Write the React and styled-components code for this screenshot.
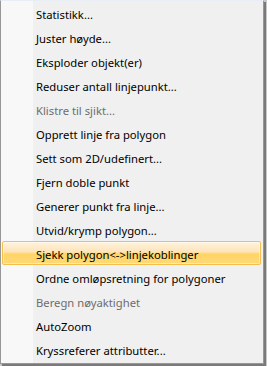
import styled, { createGlobalStyle } from "styled-components";

const items = [
    { label: "Statistikk..." },
    { label: "Juster høyde..." },
    { label: "Eksploder objekt(er)" },
    { label: "Reduser antall linjepunkt..." },
    { label: "Klistre til sjikt...", disabled: true },
    { label: "Opprett linje fra polygon" },
    { label: "Sett som 2D/udefinert..." },
    { label: "Fjern doble punkt" },
    { label: "Generer punkt fra linje..." },
    { label: "Utvid/krymp polygon..." },
    { label: "Sjekk polygon<->linjekoblinger", active: true },
    { label: "Ordne omløpsretning for polygoner" },
    { label: "Beregn nøyaktighet", disabled: true },
    { label: "AutoZoom" },
    { label: "Kryssreferer attributter..." },
];

const GlobalStyle = createGlobalStyle`
    html, body {
        margin: 0;
        padding: 0;
        background: #d4d4d4;
    }
`;

export default function App() {
    return (
        <>
            <GlobalStyle />
            <Frame>
                <Menu>
                    {items.map((item) => (
                        <Item
                            key={item.label}
                            $active={item.active}
                            $disabled={item.disabled}
                        >
                            {item.label}
                        </Item>
                    ))}
                </Menu>
            </Frame>
        </>
    );
}

const Frame = styled.div`
    width: 267px;
    height: 366px;
    overflow: hidden;
    background: #c8c8c8;
`;

const Menu = styled.div`
    width: 262px;
    height: 361px;
    display: flex;
    flex-direction: column;
    background: linear-gradient(
        to right,
        #f8f8f8 0,
        #f8f8f8 32px,
        #f0f0f0 32px,
        #f0f0f0 100%
    );
    border: 1px solid #979797;
    border-top-color: #e9eef6;
    box-shadow: 2px 2px 0 #7a7a7a;
    padding-bottom: 1px;
    box-sizing: content-box;
    font-family: "Noto Sans", "Open Sans", sans-serif;
    font-size: 11.25px;
`;

const Item = styled.div`
    height: 24px;
    box-sizing: border-box;
    margin: 0 2px 0 1px;
    padding: 2px 0 0 33px;
    display: flex;
    align-items: center;
    white-space: nowrap;
    border: 1px solid ${(p) => (p.$active ? "#f4c04a" : "transparent")};
    border-radius: 2px;
    color: ${(p) => (p.$disabled ? "#6d6d6d" : "#000")};
    background: ${(p) =>
        p.$active
            ? "linear-gradient(to bottom, #fff3dc 0%, #fde4bb 45%, #ffd465 55%, #ffd978 100%)"
            : "transparent"};
    box-shadow: ${(p) =>
        p.$active ? "inset 0 0 0 1px rgba(255, 255, 255, 0.45)" : "none"};
`;
